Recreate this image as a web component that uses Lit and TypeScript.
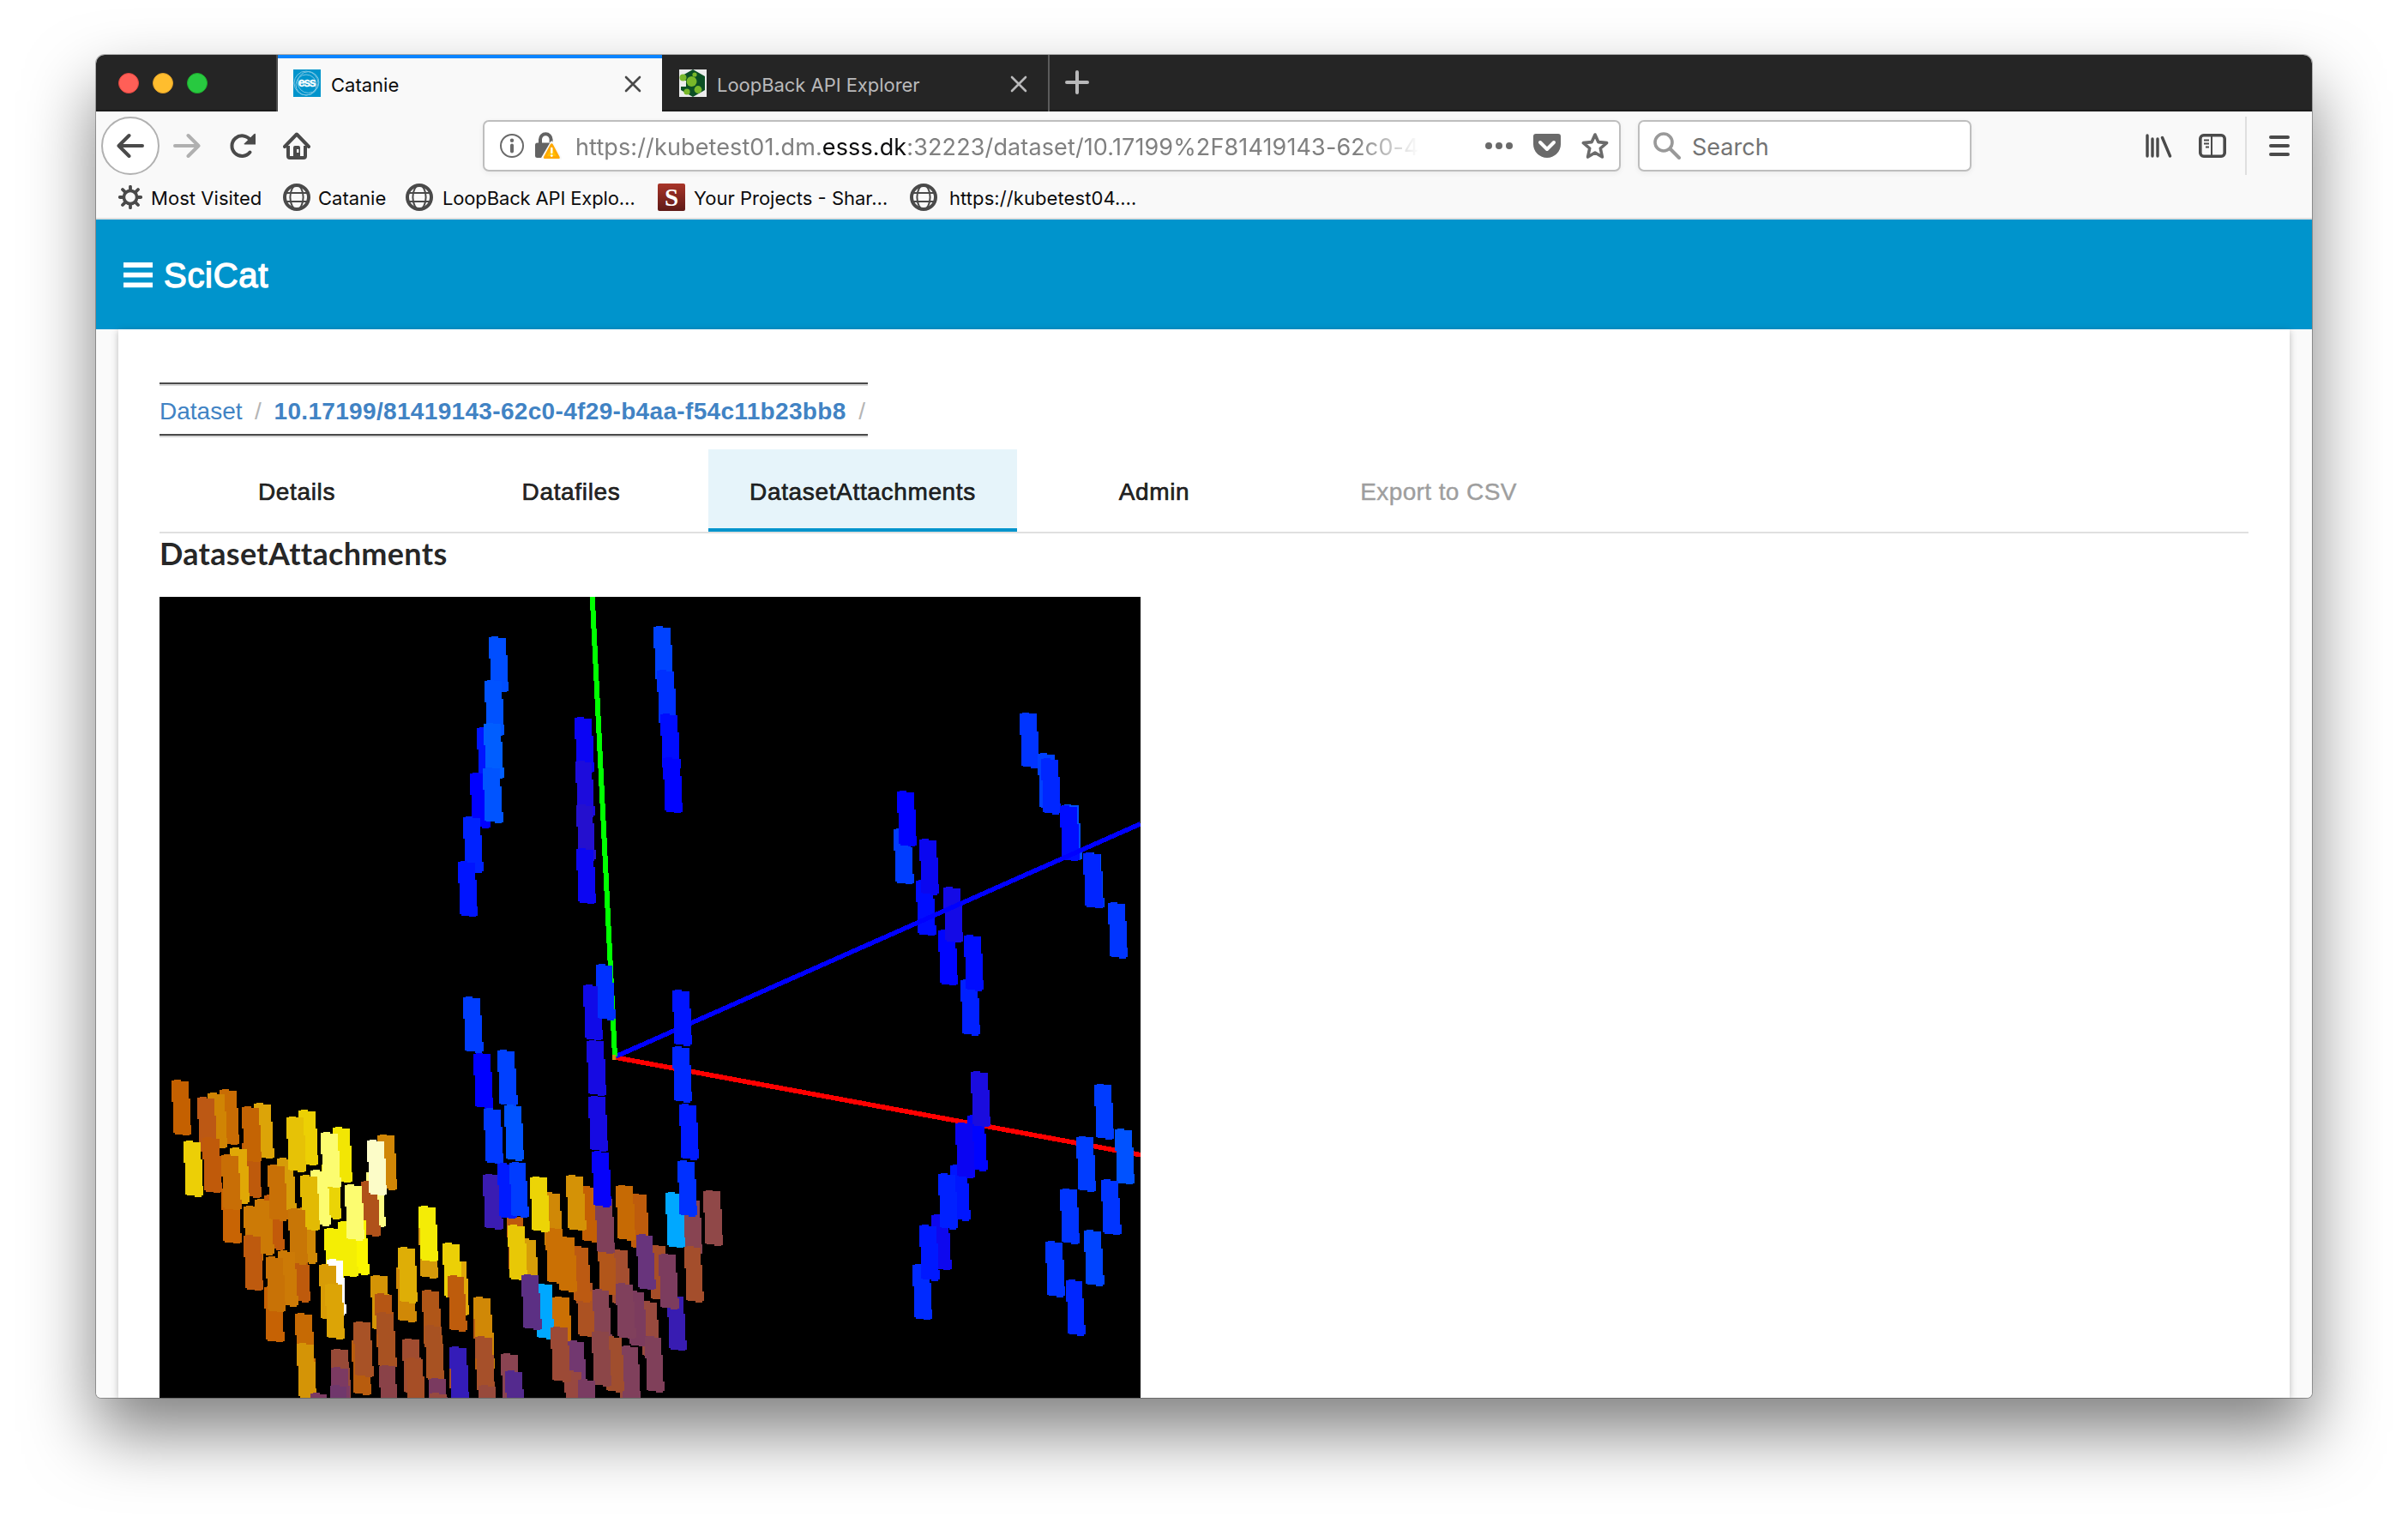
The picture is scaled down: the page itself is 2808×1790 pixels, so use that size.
import { LitElement, html, svg, css } from "lit";
import { customElement, property } from "lit/decorators.js";

type Block = [number, number, string];
interface Cluster { x: number; y: number; blocks: Block[]; }

// Block positions are in thirds of a pixel from their cluster's origin, back to front.
const BACK: Cluster[] = [
  { x: -6, y: 544, blocks: [
    [60, 57, "#c46000"], [228, 90, "#c86c04"], [186, 102, "#d08404"], [150, 117, "#bc5814"], [168, 258, "#c05a0a"],
    [102, 271, "#eccf06"], [306, 275, "#be5a0c"], [349, 138, "#dca408"], [306, 150, "#c46404"],
    [264, 295, "#e0a806"], [235, 435, "#c86404"], [235, 318, "#c86e06"],
    [385, 458, "#c25a0a"], [350, 475, "#cc7a06"], [312, 497, "#cc7a06"], [312, 600, "#be5a0e"],
    [428, 331, "#d69c08"], [397, 355, "#c87006"],
    [504, 162, "#ecd004"], [462, 185, "#e6c206"], [585, 350, "#ead406"],
    [624, 222, "#f2e604"], [583, 240, "#fcfc70"], [547, 373, "#fcfc70"],
    [477, 640, "#be5a0c"], [500, 505, "#d08806"], [510, 390, "#e2ba04"], [468, 508, "#c87606"],
    [780, 248, "#d08606"], [740, 378, "#fcfc84"], [722, 410, "#b0521a"], [744, 267, "#fcfcc8"],
    [683, 545, "#fbf600"], [643, 552, "#f4ee04"], [594, 575, "#f4ee04"], [666, 424, "#fcfc70"],
    [602, 685, "#ffffff"], [576, 703, "#d89c06"], [597, 770, "#dca406"],
    [385, 780, "#c66204"], [433, 655, "#cc7a06"], [390, 675, "#c87206"],
    [493, 873, "#c66a04"], [498, 978, "#d49406"],
    [924, 557, "#d69a0a"], [924, 498, "#f4ec06"], [847, 710, "#d08806"], [852, 643, "#deae06"],
    [757, 740, "#d49406"], [772, 805, "#b65614"], [778, 870, "#a85222"], [785, 1055, "#8a4248"],
    [937, 793, "#b05618"], [945, 915, "#a85222"], [960, 1100, "#7a3a60"], [963, 1153, "#984a40"],
    [868, 962, "#a04c30"], [880, 1030, "#a64e26"],
    [690, 965, "#b85c0e"], [697, 902, "#a85226"],
    [618, 998, "#984a38"], [622, 1040, "#984a38"], [618, 1062, "#7c3a62"], [614, 1125, "#70386c"], [545, 1152, "#7c3a62"],
  ]},
  { x: 334, y: 644, blocks: [
    [12, 387, "#e0a808"], [-12, 327, "#ecd006"], [5, 442, "#be5c0c"],
    [12, 760, "#a64e28"], [12, 690, "#341cb8"],
    [102, 575, "#d08806"], [97, 585, "#b85c10"], [97, 516, "#d08806"], [102, 655, "#a6502a"], [115, 825, "#984a3c"],
    [193, 714, "#8a4452"], [207, 775, "#542a8e"],
    [212, 232, "#be5a0c"], [257, 312, "#d69e08"], [216, 264, "#e8c806"],
    [312, 470, "#00a8ff"], [265, 437, "#5c3084"],
    [340, 150, "#d08806"], [455, 462, "#ac5222"], [440, 340, "#bc5a12"], [390, 305, "#ca7004"], [348, 275, "#ca7004"], [294, 95, "#ecd406"],
    [470, 130, "#c46004"], [421, 90, "#d49206"], [372, 515, "#ca7004"],
    [643, 155, "#be5c0c"], [594, 125, "#c66a04"],
    [577, 350, "#a44e30"], [530, 315, "#b2561a"], [522, 170, "#80405a"],
    [512, 490, "#864454"], [608, 820, "#984a3c"], [612, 688, "#80405c"], [555, 655, "#a04e2e"], [510, 635, "#8c4648"],
    [680, 532, "#984a3e"], [635, 495, "#7c3c5e"], [595, 468, "#80405c"], [695, 655, "#80405a"],
    [710, 335, "#a64e28"], [665, 297, "#68347c"], [773, 510, "#381cb2"], [745, 365, "#7c3c5e"],
    [828, 175, "#884452"], [833, 340, "#a44e2c"], [768, 150, "#00a8ff"], [900, 143, "#904848"],
    [425, 670, "#723870"], [415, 775, "#984840"], [367, 620, "#9c4a36"], [463, 805, "#7a3c62"],
  ]},
  { x: 314, y: -6, blocks: [
    [210, 156, "#004eff"], [168, 475, "#0014ff"], [145, 632, "#0000ff"], [195, 308, "#0052ff"], [193, 458, "#005eff"], [190, 614, "#0054ff"],
    [121, 787, "#0022ff"], [102, 942, "#0014ff"],
    [510, 438, "#0a04f4"], [512, 592, "#1c0cdc"], [515, 745, "#2410ce"], [516, 897, "#0c06f2"],
    [787, 120, "#0042ff"], [798, 273, "#0030ff"], [811, 427, "#000cff"], [819, 579, "#0002ff"],
  ]},
  { x: 834, y: 124, blocks: [
    [67, 438, "#003cff"], [78, 306, "#0000ff"], [145, 618, "#000cff"], [156, 475, "#0a06f0"],
    [222, 792, "#0004ff"], [240, 642, "#140ae6"], [300, 967, "#0020ff"], [312, 811, "#000cff"],
    [507, 32, "#0034ff"], [571, 175, "#0040ff"], [582, 193, "#0026ff"], [655, 353, "#0050ff"], [648, 357, "#000cff"],
    [734, 522, "#004aff"], [730, 522, "#0024ff"], [816, 697, "#0034ff"],
  ]},
];

const FRONT: Cluster[] = [
  { x: 314, y: 404, blocks: [
    [121, 187, "#003cff"], [156, 383, "#0000ff"], [192, 576, "#0038ff"], [241, 373, "#0040ff"], [264, 565, "#0052ff"],
    [190, 806, "#3a1cb2"], [240, 768, "#001aff"], [281, 764, "#003cff"],
    [540, 144, "#100ae8"], [584, 73, "#0030ff"], [552, 338, "#160ae2"], [558, 533, "#160ae2"], [570, 727, "#0602fa"],
    [852, 163, "#0014ff"], [852, 361, "#0026ff"], [876, 562, "#001aff"], [870, 760, "#0030ff"],
  ]},
  { x: 854, y: 524, blocks: [
    [265, 241, "#0004ff"], [205, 415, "#0016ff"], [222, 266, "#0a04f2"], [276, 87, "#1a0cde"],
    [139, 588, "#0e08ee"], [162, 445, "#0020ff"], [72, 762, "#002aff"], [97, 625, "#0018ff"],
    [708, 131, "#003cff"], [780, 288, "#0052ff"], [645, 314, "#003cff"], [733, 465, "#0034ff"],
    [588, 497, "#0034ff"], [673, 643, "#0044ff"], [537, 682, "#0034ff"], [608, 817, "#0026ff"],
  ]},
];

@customElement("detector-view")
class DetectorView extends LitElement {
  static styles = css`
    :host { display: block; width: 1144px; height: 934px; background: #000; }
    svg { display: block; }
  `;
  private cluster(c: Cluster) {
    return svg`<g transform="translate(${c.x} ${c.y}) scale(0.33333)">
      ${c.blocks.map(([x, y, f]) => svg`<path fill=${f} transform="translate(${x} ${y})"
        d="M0 3H9V0H33V5H59V66H65V158H70V192H64V196H40V191H12V187H6V78H0Z"/>`)}
    </g>`;
  }
  render() {
    return html`<svg width="1144" height="934" viewBox="0 0 1144 934" shape-rendering="crispEdges">
      ${BACK.map((c) => this.cluster(c))}
      <path d="M531 537L1144 650.7" stroke="#f00" stroke-width="5.6"/>
      <path d="M532 536L1144 264.7" stroke="#00f" stroke-width="5.4"/>
      <path d="M504.7 0L531 536" stroke="#0f0" stroke-width="6"/>
      <rect x="528" y="534" width="4" height="6" fill="#c88a10"/>
      ${FRONT.map((c) => this.cluster(c))}
    </svg>`;
  }
}

const ICONS: Record<string, [number, number, unknown]> = {
  close: [20, 20, svg`<path d="M2 2L18 18M18 2L2 18" stroke="currentColor" stroke-width="2.6" stroke-linecap="round"/>`],
  plus: [28, 28, svg`<path d="M14 2V26M2 14H26" stroke="currentColor" stroke-width="4" stroke-linecap="round"/>`],
  back: [32, 32, svg`<path d="M30 16H3M14.5 4L2.5 16L14.5 28" fill="none" stroke="currentColor" stroke-width="4" stroke-linecap="round" stroke-linejoin="round"/>`],
  forward: [32, 32, svg`<path d="M2 16H29M17.5 4L29.5 16L17.5 28" fill="none" stroke="currentColor" stroke-width="4" stroke-linecap="round" stroke-linejoin="round"/>`],
  reload: [32, 32, svg`<path d="M24.5 23.5A11.8 11.8 0 1 1 25 9.5" fill="none" stroke="currentColor" stroke-width="4" stroke-linecap="round"/><path d="M31 3V14.5H18.5Q17 14.5 18 13.2L29 2.4Q31 1 31 3Z" fill="currentColor"/>`],
  home: [32, 32, svg`<path d="M2 17L16 2.5L30 17" fill="none" stroke="currentColor" stroke-width="4" stroke-linecap="round" stroke-linejoin="round"/><path d="M6 16V28Q6 30 8 30H24Q26 30 26 28V16" fill="none" stroke="currentColor" stroke-width="4"/><path fill-rule="evenodd" d="M12 29V18Q12 16 14 16H18Q20 16 20 18V29ZM16 20V24H18.4V20Z" fill="currentColor"/>`],
  info: [30, 30, svg`<circle cx="15" cy="15" r="13" fill="none" stroke="currentColor" stroke-width="2"/><circle cx="15" cy="8.8" r="2.2" fill="currentColor"/><path d="M15 14.5V21.5" stroke="currentColor" stroke-width="4" stroke-linecap="round"/>`],
  lock: [32, 32, svg`<path d="M7 14V8.5A6.3 6.3 0 0 1 19.6 8.5V12" fill="none" stroke="#636363" stroke-width="4"/><rect x="1" y="12.5" width="21" height="17.5" rx="2.5" fill="#636363"/><path d="M20.3 12L31 30.5H9.5Z" fill="#f9f9f9" stroke="#f9f9f9" stroke-width="3" stroke-linejoin="round"/><path d="M20.3 14.8L28.3 29.6H12.3Z" fill="#ffbf00" stroke="#ffa800" stroke-width="3" stroke-linejoin="round"/><path d="M20.3 19V24" stroke="#fff" stroke-width="2.4" stroke-linecap="round"/><circle cx="20.3" cy="27.6" r="1.4" fill="#fff"/>`],
  dots: [32, 8, svg`<circle cx="4" cy="4" r="4" fill="currentColor"/><circle cx="16" cy="4" r="4" fill="currentColor"/><circle cx="28" cy="4" r="4" fill="currentColor"/>`],
  pocket: [32, 28, svg`<path d="M3 0H29Q32 0 32 3V12A16 16 0 0 1 0 12V3Q0 0 3 0Z" fill="currentColor"/><path d="M8 10L16 18L24 10" fill="none" stroke="#fff" stroke-width="4" stroke-linecap="round" stroke-linejoin="round"/>`],
  star: [32, 32, svg`<path d="M16 3L19.8 11.6L29.6 12.6L22.3 19L24.4 29L16 24L7.6 29L9.7 19L2.4 12.6L12.2 11.6Z" fill="none" stroke="currentColor" stroke-width="3.6" stroke-linejoin="round"/>`],
  search: [32, 32, svg`<circle cx="12" cy="12" r="10" fill="none" stroke="currentColor" stroke-width="3.6"/><path d="M19.5 19.5L30 30" stroke="currentColor" stroke-width="4" stroke-linecap="round"/>`],
  library: [32, 28, svg`<path d="M2 2V26M8 6V26M14 6V26M19.5 4.5L28.5 26" stroke="currentColor" stroke-width="3.4" stroke-linecap="round"/>`],
  sidebar: [32, 28, svg`<rect x="1.8" y="1.8" width="28.4" height="24.4" rx="4" fill="none" stroke="currentColor" stroke-width="3.6"/><path d="M15 2V26" stroke="currentColor" stroke-width="2"/><path d="M6 7.5H12M6 11.5H12M8 15.5H12" stroke="currentColor" stroke-width="2"/>`],
  menu: [24, 24, svg`<path d="M2 2H22M2 12H22M2 22H22" stroke="currentColor" stroke-width="4" stroke-linecap="round"/>`],
  gear: [28, 28, svg`<circle cx="14" cy="14" r="7.6" fill="none" stroke="currentColor" stroke-width="3.6"/><path d="M14 5V1.8M14 23V26.2M5 14H1.8M23 14H26.2M7.6 7.6L5 5M20.4 7.6L23 5M7.6 20.4L5 23M20.4 20.4L23 23" stroke="currentColor" stroke-width="3.8" stroke-linecap="round"/>`],
  globe: [32, 32, svg`<g fill="none" stroke="currentColor"><circle cx="16" cy="16" r="14" stroke-width="4"/><ellipse cx="16" cy="16" rx="7.6" ry="14" stroke-width="2"/><path d="M3 11H29M3 21H29" stroke-width="2"/></g>`],
  bars: [34, 30, svg`<path d="M0 3H34M0 14.7H34M0 26.4H34" stroke="currentColor" stroke-width="5.8"/>`],
  ess: [32, 32, svg`<rect width="32" height="32" fill="#0094cc"/><g fill="none" stroke="#7cc6e4" stroke-width="1"><circle cx="15" cy="16" r="14"/><circle cx="17.5" cy="15" r="12.4"/><circle cx="15" cy="18" r="12"/></g><text x="15.4" y="19.6" text-anchor="middle" font-family="Liberation Sans, sans-serif" font-weight="700" font-size="14" letter-spacing="-1.3" fill="#fff" stroke="#fff" stroke-width=".3">ess</text>`],
  loopback: [32, 32, svg`<rect width="32" height="32" fill="#ececec"/><path d="M16 0L30 8V24L16 32L2 24V8Z" fill="#0b4f24"/><path d="M0 13H8V20H0Z" fill="#ececec"/><g fill="#78b82a"><circle cx="14.5" cy="14" r="6"/><circle cx="4.5" cy="9.5" r="4"/><circle cx="22" cy="23.5" r="4.4"/><circle cx="9" cy="26" r="3.6"/><circle cx="18" cy="6" r="2.6"/></g>`],
  sharelatex: [32, 32, svg`<defs><linearGradient id="g" x1="0" y1="0" x2="0" y2="1"><stop offset="0" stop-color="#a93529"/><stop offset="1" stop-color="#5e1a17"/></linearGradient></defs><rect width="32" height="32" rx="2" fill="url(#g)"/><text x="16" y="26" text-anchor="middle" font-family="Liberation Serif, serif" font-weight="700" font-size="29" fill="#fff">S</text>`],
};

@customElement("ui-icon")
class UiIcon extends LitElement {
  static styles = css`
    :host { display: block; flex: none; }
    svg { display: block; }
  `;
  @property() name = "";
  render() {
    const [w, h, body] = ICONS[this.name];
    return html`<svg width=${w} height=${h} viewBox="0 0 ${w} ${h}">${body}</svg>`;
  }
}

@customElement("browser-chrome")
class BrowserChrome extends LitElement {
  static styles = css`
    :host { display: block; font-family: Inter, "Liberation Sans", sans-serif; font-size: 22px; color: #0c0c0d; }
    .tabs { display: flex; height: 66px; background: #252525; box-shadow: inset 0 -2px #1c1c1c; }
    .lights { display: flex; gap: 16px; align-items: center; width: 212px; padding-left: 26px; box-sizing: border-box; border-right: 2px solid #4a4a4a; }
    .lights i { width: 24px; height: 24px; border-radius: 50%; box-sizing: border-box; }
    .red { background: #ff5f57; border: 1px solid #e2463f; }
    .amber { background: #ffbd2e; border: 1px solid #e0a028; }
    .green { background: #28c940; border: 1px solid #1dad2b; }
    .tab { display: flex; align-items: center; box-sizing: border-box; height: 66px; }
    .tab span { flex: 1; margin-left: 12px; white-space: nowrap; }
    .on { width: 448px; background: #f9f9f9; border-top: 4px solid #0a84ff; padding: 0 24px 0 18px; }
    .on ui-icon { margin-top: -4px; color: #4a4a4a; }
    .on span { margin-top: -1px; }
    .off { width: 452px; padding: 0 24px 0 20px; color: #b9b9ba; border-right: 2px solid #5c5c5c; }
    .off span { padding-top: 3px; letter-spacing: -.04px; }
    .on ui-icon:last-child, .off ui-icon:last-child { padding-top: 2px; }
    .add { align-self: center; margin: -2px 0 0 18px; color: #b9b9ba; }
    .nav { display: flex; align-items: center; height: 80px; padding-left: 6px; background: #f9f9f9; color: #4a4a4a; }
    .circle { display: grid; place-items: center; width: 68px; height: 68px; box-sizing: border-box; border: 2px solid #b1b1b1; border-radius: 50%; background: #fff; }
    .fwd { margin-left: 16px; color: #b0b0b0; }
    .rel { margin-left: 33px; }
    .hom { margin-left: 31px; }
    .field { display: flex; align-items: center; height: 60px; box-sizing: border-box; border: 2px solid #bebebe; border-radius: 7px; background: #fff; box-shadow: 0 2px 6px rgba(0,0,0,.06); color: #6a6a6a; font-size: 27px; }
    .url { width: 1327px; margin-left: 201px; padding-left: 17px; }
    .url .lk { margin-left: 11px; }
    .addr { width: 986px; margin-left: 16px; padding-top: 2px; overflow: hidden; white-space: nowrap; letter-spacing: .12px; color: #808080; mask-image: linear-gradient(90deg, #000 910px, transparent 984px); }
    .addr b { font-weight: 400; color: #0c0c0d; }
    .url .dt { margin-left: 75px; }
    .url .pk { margin-left: 24px; }
    .url .st { margin-left: 24px; }
    .find { width: 389px; margin-left: 20px; padding-left: 16px; }
    .find ui-icon { color: #999; }
    .find span { margin-left: 13px; padding-top: 2px; color: #737373; }
    .lib { margin-left: 203px; }
    .side { margin-left: 30px; }
    .sep { width: 2px; height: 68px; margin: 0 26px 0 22px; background: #dfdfdf; }
    .marks { display: flex; align-items: center; height: 46px; padding: 0 0 4px 26px; box-sizing: border-box; background: #f9f9f9; border-bottom: 2px solid #e0e0e0; }
    .mark { display: flex; align-items: center; white-space: nowrap; }
    .mark ui-icon { color: #4a4a4a; }
    .mark span { padding-top: 2px; }
  `;
  render() {
    return html`
      <div class="tabs">
        <div class="lights"><i class="red"></i><i class="amber"></i><i class="green"></i></div>
        <div class="tab on"><ui-icon name="ess"></ui-icon><span>Catanie</span><ui-icon name="close"></ui-icon></div>
        <div class="tab off"><ui-icon name="loopback"></ui-icon><span>LoopBack API Explorer</span><ui-icon name="close"></ui-icon></div>
        <ui-icon class="add" name="plus"></ui-icon>
      </div>
      <div class="nav">
        <div class="circle"><ui-icon name="back"></ui-icon></div>
        <ui-icon class="fwd" name="forward"></ui-icon>
        <ui-icon class="rel" name="reload"></ui-icon>
        <ui-icon class="hom" name="home"></ui-icon>
        <div class="field url">
          <ui-icon name="info"></ui-icon><ui-icon class="lk" name="lock"></ui-icon>
          <div class="addr">https://kubetest01.dm.<b>esss.dk</b>:32223/dataset/10.17199%2F81419143-62c0-4</div>
          <ui-icon class="dt" name="dots"></ui-icon><ui-icon class="pk" name="pocket"></ui-icon><ui-icon class="st" name="star"></ui-icon>
        </div>
        <div class="field find"><ui-icon name="search"></ui-icon><span>Search</span></div>
        <ui-icon class="lib" name="library"></ui-icon>
        <ui-icon class="side" name="sidebar"></ui-icon>
        <div class="sep"></div>
        <ui-icon name="menu"></ui-icon>
      </div>
      <div class="marks">
        ${this.mark("gear", "Most Visited", 10, 192, 0.05)}
        ${this.mark("globe", "Catanie", 9, 143, 0)}
        ${this.mark("globe", "LoopBack API Explo…", 11, 294, -0.15)}
        ${this.mark("sharelatex", "Your Projects - Shar…", 10, 294, 0)}
        ${this.mark("globe", "https://kubetest04.…", 14, 280, 0.08)}
      </div>`;
  }
  private mark(icon: string, label: string, gap: number, width: number, track: number) {
    return html`<div class="mark" style="width:${width}px;gap:${gap}px;letter-spacing:${track}px"><ui-icon name=${icon}></ui-icon><span>${label}</span></div>`;
  }
}

@customElement("app-root")
class AppRoot extends LitElement {
  static styles = css`
    :host { display: block; box-sizing: border-box; width: 2808px; height: 1790px; padding: 64px 112px 0; overflow: hidden; background: #fff; font-family: "Liberation Sans", Arial, sans-serif; }
    .window { width: 2584px; height: 1566px; border-radius: 10px 10px 6px 6px; box-shadow: 0 0 0 1px rgba(0,0,0,.28), 0 40px 80px rgba(0,0,0,.5); }
    .clip { height: 1566px; overflow: hidden; border-radius: inherit; background: #fafafa; }
    .bar { display: flex; align-items: center; height: 128px; padding: 2px 0 0 32px; box-sizing: border-box; background: #0094cc; color: #fff; }
    .brand { margin-left: 13px; font-size: 40px; letter-spacing: .7px; -webkit-text-stroke: 1.4px #fff; }
    .card { width: 2532px; height: 1246px; margin: 0 26px; padding: 62px 48px 0; box-sizing: border-box; background: #fff; box-shadow: 0 2px 8px rgba(0,0,0,.25); }
    .crumbs { display: flex; align-items: center; width: 826px; height: 62px; padding-top: 5px; box-sizing: border-box; border-top: 2px solid #4a4a4a; box-shadow: inset 0 2px #d6d6d6, 0 2px #d6d6d6; border-bottom: 2px solid #4a4a4a; font-size: 28px; color: #4183c4; white-space: nowrap; }
    .crumbs b { flex: none; letter-spacing: .33px; }
    .crumbs i { flex: none; width: 37px; text-align: center; font-style: normal; color: #b5b5b5; }
    .tabs { display: flex; width: 2436px; margin-top: 16px; border-bottom: 2px solid #e0e0e0; }
    .tab { width: 320px; height: 96px; box-sizing: border-box; padding-top: 3px; line-height: 94px; text-align: center; font-size: 28px; letter-spacing: .65px; color: rgba(0,0,0,.87); -webkit-text-stroke: .7px currentColor; }
    .active { width: 360px; background: #e6f4fa; border-bottom: 4px solid #0094cc; }
    .disabled { width: 343px; color: #9e9e9e; -webkit-text-stroke: .4px #9e9e9e; letter-spacing: .4px; }
    h3 { margin: -1px 0 0; height: 75px; font: 700 36px/48px Lato, sans-serif; font-variant-ligatures: none; letter-spacing: .3px; color: rgba(0,0,0,.87); }
  `;
  render() {
    return html`<div class="window"><div class="clip">
      <browser-chrome></browser-chrome>
      <div class="bar"><ui-icon name="bars"></ui-icon><span class="brand">SciCat</span></div>
      <div class="card">
        <div class="crumbs"><span>Dataset</span><i>/</i><b>10.17199/81419143-62c0-4f29-b4aa-f54c11b23bb8</b><i>/</i></div>
        <div class="tabs">
          <div class="tab">Details</div><div class="tab">Datafiles</div><div class="tab active">DatasetAttachments</div>
          <div class="tab">Admin</div><div class="tab disabled">Export to CSV</div>
        </div>
        <h3>DatasetAttachments</h3>
        <detector-view></detector-view>
      </div>
    </div></div>`;
  }
}
